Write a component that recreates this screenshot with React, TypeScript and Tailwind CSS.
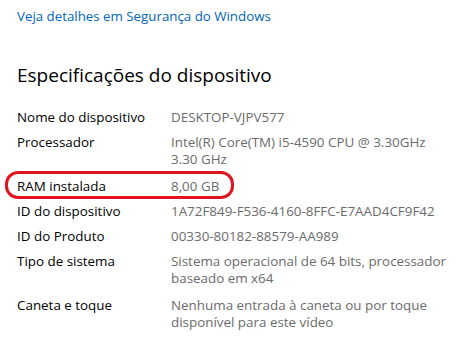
import React from "react";

const rows: { label: string; value: string[]; extra?: boolean }[] = [
  { label: "Nome do dispositivo", value: ["DESKTOP-VJPV577"] },
  { label: "Processador", value: ["Intel(R) Core(TM) i5-4590 CPU @ 3.30GHz", "3.30 GHz"], extra: true },
  { label: "RAM instalada", value: ["8,00 GB"] },
  { label: "ID do dispositivo", value: ["1A72F849-F536-4160-8FFC-E7AAD4CF9F42"] },
  { label: "ID do Produto", value: ["00330-80182-88579-AA989"] },
  { label: "Tipo de sistema", value: ["Sistema operacional de 64 bits, processador", "baseado em x64"], extra: true },
  { label: "Caneta e toque", value: ["Nenhuma entrada à caneta ou por toque", "disponível para este vídeo"], extra: true },
];

export default function App() {
  return (
    <div
      className="relative w-[458px] h-[349px] bg-white overflow-hidden pl-[17px] pt-[8px]"
      style={{ fontFamily: '"Segoe UI", "Open Sans", sans-serif' }}
    >
      <div className="text-[13.3px] leading-[17px] text-[#0067b8]">Veja detalhes em Segurança do Windows</div>
      <div className="mt-[37px] text-[19px] leading-[26px] text-black">Especificações do dispositivo</div>
      <div className="mt-[21px] flex flex-col gap-[8px] text-[13.4px] leading-[17px]">
        {rows.map((r) => (
          <div key={r.label} className={`flex ${r.extra ? "pb-[2px]" : ""}`}>
            <div className="w-[154px] shrink-0 text-black">{r.label}</div>
            <div className="text-[#6b6b6b]">
              {r.value.map((v) => (
                <div key={v}>{v}</div>
              ))}
            </div>
          </div>
        ))}
      </div>
      <div className="absolute left-[5px] top-[171px] w-[229px] h-[28px] border-[3px] border-[#e0141e] rounded-[13px]" />
    </div>
  );
}
